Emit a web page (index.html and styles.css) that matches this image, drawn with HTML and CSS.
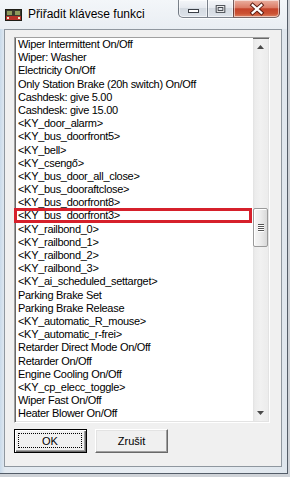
FILE: index.html
```html
<!DOCTYPE html>
<html>
<head>
<meta charset="utf-8">
<link rel="stylesheet" href="styles.css">
</head>
<body>
<div class="window">
  <div class="titlebar">
    <svg class="appicon" viewBox="0 0 17 12" width="17" height="12">
      <rect x="0.5" y="0.5" width="16" height="11" fill="#3b3a2e" stroke="#1e1d16"/>
      <rect x="2" y="2" width="5" height="4" fill="#8e9a5c"/>
      <rect x="10" y="2" width="5" height="4" fill="#8e9a5c"/>
      <rect x="1" y="7" width="15" height="4" fill="#b8322a"/>
      <rect x="2" y="8" width="2" height="2" fill="#f2e7c8"/>
      <rect x="13" y="8" width="2" height="2" fill="#f2e7c8"/>
    </svg>
    <span class="title">Přiřadit klávese funkci</span>
    <div class="caption">
      <div class="cbtn min">
        <svg viewBox="0 0 28 17"><rect x="9.5" y="9.5" width="10" height="3" fill="#fff" stroke="#3a3f46"/></svg>
      </div>
      <div class="cbtn max">
        <svg viewBox="0 0 26 17"><rect x="8.5" y="5.5" width="9" height="7" fill="#fff" stroke="#3a3f46"/><rect x="10.5" y="7.5" width="5" height="3" fill="#e7ebef" stroke="#3a3f46"/></svg>
      </div>
      <div class="cbtn close">
        <svg viewBox="0 0 46 17"><path d="M19 5 L28 13 M28 5 L19 13" stroke="#5a1a10" stroke-width="4.2" stroke-linecap="square"/><path d="M19 5 L28 13 M28 5 L19 13" stroke="#fff" stroke-width="2.2" stroke-linecap="square"/></svg>
      </div>
    </div>
  </div>
  <div class="client">
    <div class="listbox">
      <ul class="items">
        <li>Wiper Intermittent On/Off</li>
        <li>Wiper: Washer</li>
        <li>Electricity On/Off</li>
        <li>Only Station Brake (20h switch) On/Off</li>
        <li>Cashdesk: give 5.00</li>
        <li>Cashdesk: give 15.00</li>
        <li>&lt;KY_door_alarm&gt;</li>
        <li>&lt;KY_bus_doorfront5&gt;</li>
        <li>&lt;KY_bell&gt;</li>
        <li>&lt;KY_csengő&gt;</li>
        <li>&lt;KY_bus_door_all_close&gt;</li>
        <li>&lt;KY_bus_dooraftclose&gt;</li>
        <li>&lt;KY_bus_doorfront8&gt;</li>
        <li>&lt;KY_bus_doorfront3&gt;</li>
        <li>&lt;KY_railbond_0&gt;</li>
        <li>&lt;KY_railbond_1&gt;</li>
        <li>&lt;KY_railbond_2&gt;</li>
        <li>&lt;KY_railbond_3&gt;</li>
        <li>&lt;KY_ai_scheduled_settarget&gt;</li>
        <li>Parking Brake Set</li>
        <li>Parking Brake Release</li>
        <li>&lt;KY_automatic_R_mouse&gt;</li>
        <li>&lt;KY_automatic_r-frei&gt;</li>
        <li>Retarder Direct Mode On/Off</li>
        <li>Retarder On/Off</li>
        <li>Engine Cooling On/Off</li>
        <li>&lt;KY_cp_elecc_toggle&gt;</li>
        <li>Wiper Fast On/Off</li>
        <li>Heater Blower On/Off</li>
        <li>&lt;KY_bus_doorback_all_toggle&gt;</li>
      </ul>
      <div class="scrollbar">
        <div class="sb-arrow"><svg viewBox="0 0 7 4" width="7" height="4"><path d="M0 4 L3.5 0 L7 4 Z" fill="#4a4a4a"/></svg></div>
        <div class="sb-track">
          <div class="thumb"><span class="grip"></span><span class="grip"></span><span class="grip"></span><span class="grip"></span></div>
        </div>
        <div class="sb-arrow"><svg viewBox="0 0 7 4" width="7" height="4"><path d="M0 0 L7 0 L3.5 4 Z" fill="#4a4a4a"/></svg></div>
      </div>
      <div class="mark"></div>
    </div>
    <div class="buttons">
      <button class="btn default"><span class="focus">OK</span></button>
      <button class="btn"><span class="label">Zrušit</span></button>
    </div>
  </div>
</div>
</body>
</html>
```
FILE: styles.css
```css
* { box-sizing: border-box; }
html, body { margin: 0; padding: 0; }
body {
  width: 290px;
  height: 477px;
  overflow: hidden;
  background: #cfd3d8;
  font-family: "Liberation Sans", Arial, sans-serif;
}
.window {
  width: 288px;
  height: 474px;
  display: flex;
  flex-direction: column;
  background: linear-gradient(to right, #c9daea 0px, #e3eaf1 5px, #e9eef3 60%, #dfe6ed 100%);
  border-right: 1px solid #545d68;
  border-bottom: 1px solid #545d68;
}
.titlebar {
  height: 29px;
  flex: none;
  display: flex;
  align-items: flex-start;
  padding: 0 7px 0 5px;
  background: linear-gradient(to bottom, #f3f6f9, #e9eef3);
}
.appicon { margin-top: 9px; flex: none; }
.title {
  margin-left: 6px;
  margin-top: 6px;
  font-size: 12px;
  line-height: 16px;
  color: #000;
  white-space: nowrap;
  text-shadow: 0 0 6px #fff, 0 0 3px #fff;
}
.caption {
  margin-left: auto;
  display: flex;
  height: 18px;
  box-shadow: 0 1px 0 rgba(255,255,255,.8);
  border-radius: 0 0 5px 5px;
}
.cbtn {
  height: 18px;
  border: 1px solid rgba(45,55,68,.6);
  border-top: none;
  box-shadow: inset 0 0 0 1px rgba(255,255,255,.55);
}
.cbtn svg { display: block; width: 100%; height: 100%; }
.min {
  width: 29px;
  border-right: none;
  border-bottom-left-radius: 5px;
  background: linear-gradient(to bottom, #f4f6f9 0%, #e6eaef 45%, #d4dae1 50%, #dde3ea 100%);
}
.max {
  width: 26px;
  border-right: none;
  background: linear-gradient(to bottom, #f4f6f9 0%, #e6eaef 45%, #d4dae1 50%, #dde3ea 100%);
}
.close {
  width: 47px;
  border-bottom-right-radius: 5px;
  background: linear-gradient(to bottom, #eab1a2 0%, #dc7c66 45%, #c5432a 52%, #cc5334 80%, #de8464 100%);
}
.client {
  flex: 1;
  margin: 0 5px 6px 4px;
  background: #f0f0f0;
  border: 1px solid #8f979f;
  padding: 7px 11px 13px 9px;
  display: flex;
  flex-direction: column;
}
.listbox {
  flex: none;
  height: 386px;
  position: relative;
  display: flex;
  padding: 1px;
  background: #fff;
  border: 1px solid;
  border-color: #a0a0a0 #ffffff #ffffff #a0a0a0;
  box-shadow: inset 1px 1px 0 #696969, inset -1px -1px 0 #e3e3e3;
}
.items {
  flex: 1;
  min-width: 0;
  list-style: none;
  margin: -1px 0 0 0;
  padding: 0 0 0 2px;
  overflow: hidden;
  font-size: 11px;
  line-height: 13.2px;
  letter-spacing: -0.3px;
  color: #000;
  background: #fff;
}
.items li { white-space: nowrap; height: 13.2px; }
.scrollbar {
  flex: none;
  width: 15px;
  display: flex;
  flex-direction: column;
  background: linear-gradient(to right, #e2e2e2 0px, #ececec 2px, #f1f1f1 50%, #ececec 100%);
}
.sb-arrow {
  height: 16px;
  display: flex;
  align-items: center;
  justify-content: center;
  flex: none;
}
.sb-arrow svg { display: block; }
.sb-track { flex: 1; }
.thumb {
  margin-top: 153px;
  height: 39px;
  border: 1px solid #9a9a9a;
  border-radius: 2px;
  background: linear-gradient(to right, #f6f6f6 0%, #ececec 50%, #d9d9d9 100%);
  box-shadow: inset 1px 1px 0 #fff;
  display: flex;
  flex-direction: column;
  align-items: center;
  justify-content: center;
  gap: 1px;
}
.grip {
  width: 6px;
  height: 1px;
  background: #555;
  box-shadow: 0 1px 0 #fff;
}
.mark {
  position: absolute;
  left: -1px;
  top: 170px;
  width: 238px;
  height: 15px;
  border: 3px solid #d6202b;
}
.buttons {
  display: flex;
  gap: 8px;
  margin-top: 6px;
}
.btn {
  width: 73px;
  height: 24px;
  padding: 0;
  font-family: "Liberation Sans", Arial, sans-serif;
  font-size: 11px;
  color: #000;
  background: #f0f0f0;
  border: 1px solid;
  border-color: #ffffff #696969 #696969 #ffffff;
  box-shadow: inset -1px -1px 0 #a0a0a0, inset 1px 1px 0 #e3e3e3;
  display: flex;
  align-items: center;
  justify-content: center;
}
.btn.default {
  border: 1px solid #000;
  box-shadow: inset 1px 1px 0 #fff, inset -1px -1px 0 #696969, inset -2px -2px 0 #a0a0a0;
  padding: 3px 4px 4px 3px;
}
.focus {
  flex: 1;
  align-self: stretch;
  display: flex;
  align-items: center;
  justify-content: center;
  border: 1px dotted #000;
}
.label { display: block; }
```
